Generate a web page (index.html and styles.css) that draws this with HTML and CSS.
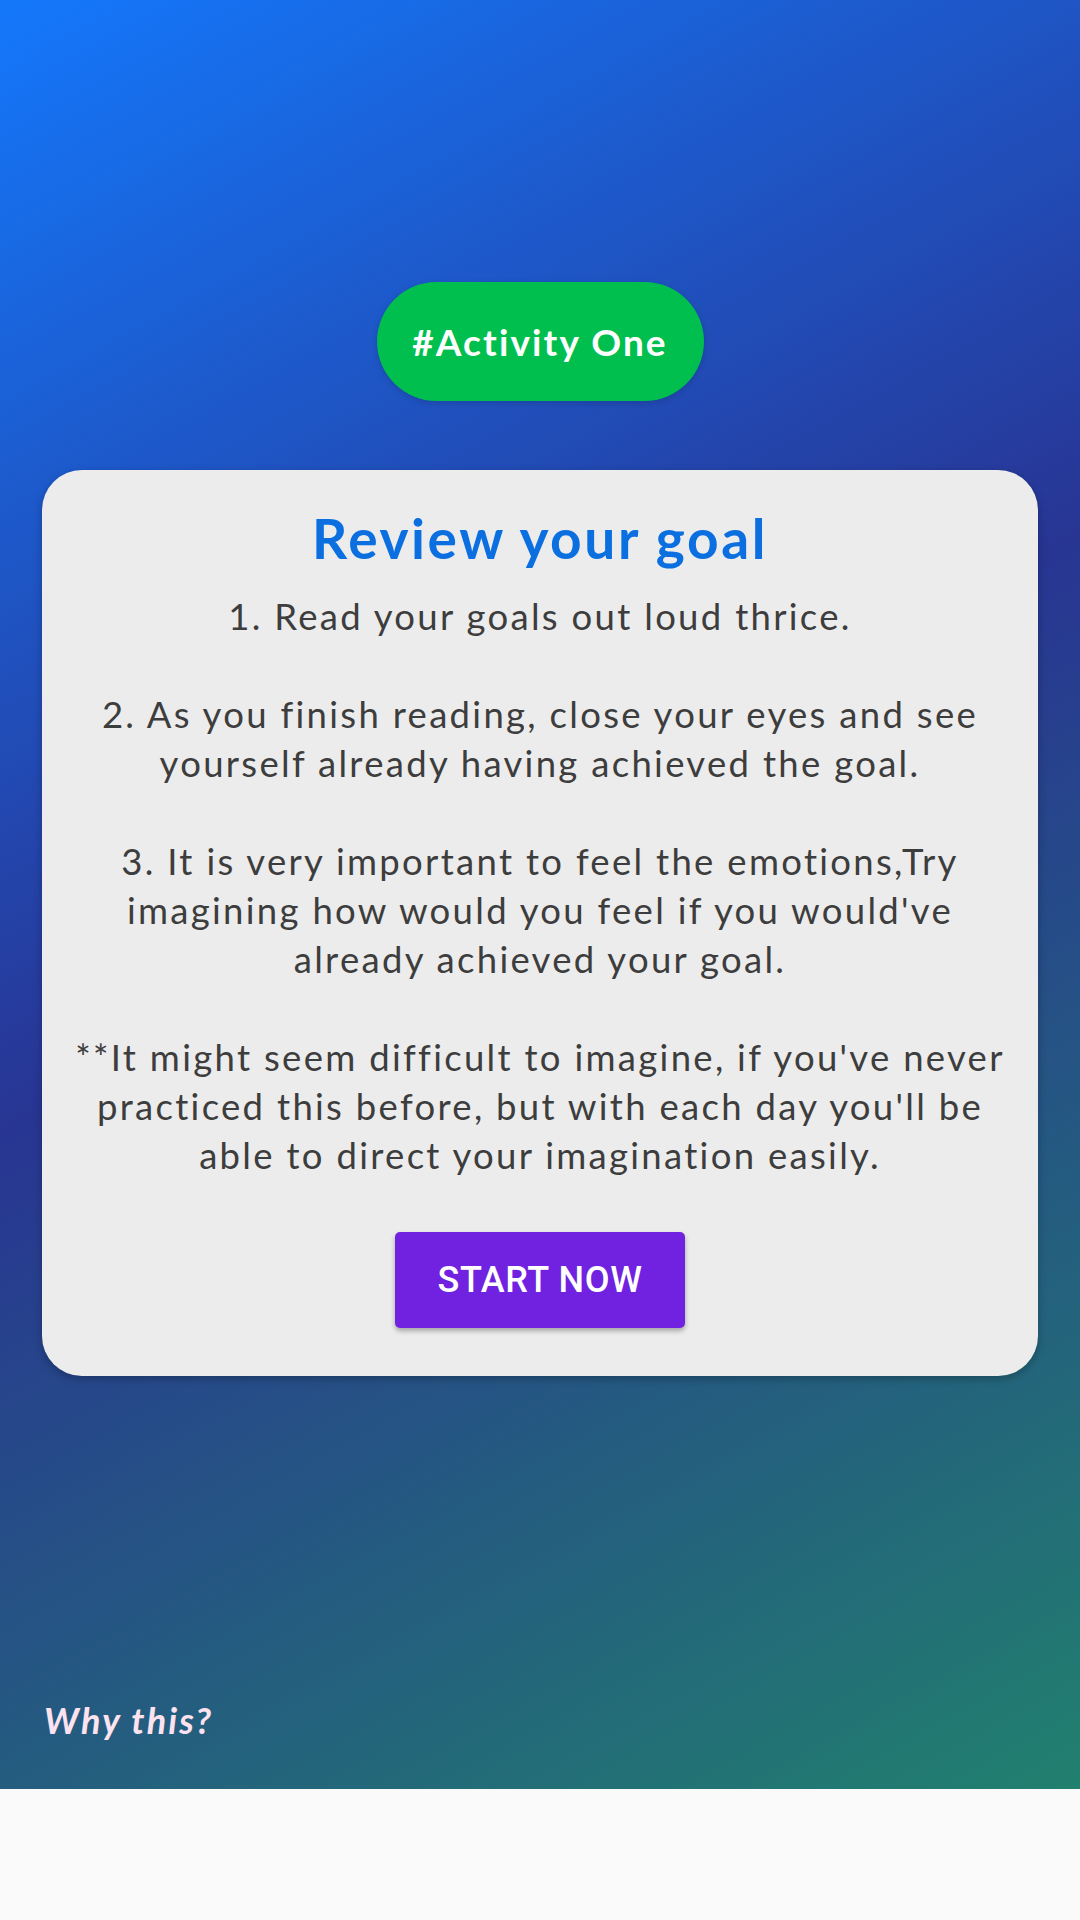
FILE: index.html
```html
<!DOCTYPE html>
<html lang="en">
<head>
<meta charset="utf-8">
<title>Review your goal</title>
<link rel="stylesheet" href="styles.css">
</head>
<body>
<div class="screen">
  <main class="hero">
    <div class="tag">#Activity One</div>
    <section class="card">
      <h1 class="title">Review your goal</h1>
      <p class="steps">1. Read your goals out loud thrice.<br><br>2. As you finish reading, close your eyes and see<br>yourself already having achieved the goal.<br><br>3. It is very important to feel the emotions,Try<br>imagining how would you feel if you would've<br>already achieved your goal.<br><br>**It might seem difficult to imagine, if you've never<br>practiced this before, but with each day you'll be<br>able to direct your imagination easily.</p>
      <button class="start">START NOW</button>
    </section>
    <a class="why">Why this?</a>
  </main>
  <div class="bottom"></div>
</div>
</body>
</html>
```
FILE: styles.css
```css
* { box-sizing: border-box; }
html, body { margin: 0; padding: 0; }
body {
  width: 1080px;
  height: 1920px;
  background: #fafafa;
  font-family: Lato, "Open Sans", sans-serif;
  overflow: hidden;
}
.screen {
  display: flex;
  flex-direction: column;
  height: 1920px;
}
.hero {
  height: 1789px;
  background: linear-gradient(151deg, #1478fb 0%, #283593 47.3%, #21806e 100%);
  display: flex;
  flex-direction: column;
  align-items: center;
  padding: 282px 42px 49px;
}
.tag {
  width: 327px;
  height: 119px;
  border-radius: 60px;
  background: #00bf4e;
  color: #fff;
  font-weight: 700;
  font-size: 37px;
  display: flex;
  align-items: center;
  justify-content: center;
  letter-spacing: 2.1px;
  box-shadow: 0 2px 6px rgba(0,0,0,0.15);
}
.card {
  margin-top: 69px;
  width: 996px;
  background: #ececec;
  border-radius: 40px;
  padding: 34px 10px 48px;
  display: flex;
  flex-direction: column;
  align-items: center;
  box-shadow: 0 3px 8px rgba(0,0,0,0.25);
}
.title {
  margin: 0;
  font-size: 55px;
  line-height: 68px;
  font-weight: 700;
  color: #0b6fe0;
  letter-spacing: 2.6px;
}
.steps {
  margin: 0;
  margin-top: 20px;
  font-size: 36.5px;
  line-height: 49px;
  color: #3d3d3d;
  text-align: center;
  white-space: nowrap;
  letter-spacing: 2.3px;
}
.start {
  margin-top: 52px;
  width: 290px;
  height: 96px;
  border: none;
  border-radius: 5px;
  background: #7022e0;
  color: #fff;
  font-family: Roboto, sans-serif;
  font-weight: 500;
  font-size: 36px;
  letter-spacing: 0.6px;
  box-shadow: 0 3px 5px rgba(0,0,0,0.3);
  padding: 0;
}
.why {
  margin-top: auto;
  align-self: flex-start;
  margin-left: 2px;
  font-size: 36px;
  font-weight: 700;
  font-style: italic;
  color: #fde3ef;
  line-height: 40px;
  letter-spacing: 2.2px;
}
.bottom {
  flex: 1;
  background: #fafafa;
}
```
